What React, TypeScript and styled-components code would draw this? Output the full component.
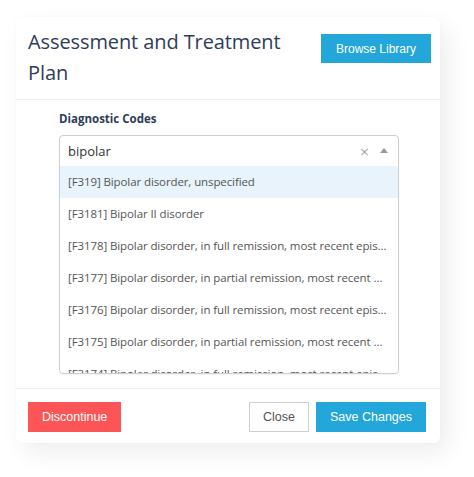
import React from "react";
import styled, { createGlobalStyle } from "styled-components";

const Global = createGlobalStyle`
  html, body { margin: 0; padding: 0; background: #ffffff; }
  body { font-family: "Open Sans", "Noto Sans", sans-serif; }
  * { box-sizing: border-box; }
`;

const Page = styled.div`
  padding: 17px 34px 34px 16px;
`;

const Card = styled.div`
  width: 424px;
  height: 426px;
  background: #fff;
  border-radius: 6px;
  box-shadow: 8px 10px 24px rgba(0, 0, 0, 0.07), 0 0 2px rgba(0, 0, 0, 0.03);
  display: flex;
  flex-direction: column;
`;

const Header = styled.div`
  display: flex;
  align-items: flex-start;
  justify-content: space-between;
  padding: 9px 9px 11px 12px;
  border-bottom: 1px solid #ececec;
`;

const Title = styled.h2`
  margin: 0;
  width: 270px;
  font-family: "Open Sans", sans-serif;
  font-size: 20px;
  letter-spacing: -0.1px;
  font-weight: 400;
  line-height: 31px;
  color: #2e3d58;
`;

const Button = styled.button<{ $variant: "primary" | "danger" | "default" }>`
  font-family: "Liberation Sans", Arial, sans-serif;
  font-size: 12.5px;
  height: 30px;
  padding: 0 13px;
  border: 1px solid
    ${(p) => (p.$variant === "primary" ? "#23a6da" : p.$variant === "danger" ? "#fd5557" : "#cfcfcf")};
  background: ${(p) => (p.$variant === "primary" ? "#23a6da" : p.$variant === "danger" ? "#fd5557" : "#fff")};
  color: ${(p) => (p.$variant === "default" ? "#555" : "#fff")};
  border-radius: 0;
  cursor: pointer;
`;

const BrowseButton = styled(Button)`
  margin-top: 8px;
  height: 29px;
  padding: 0 14px;
  font-size: 12px;
`;

const Body = styled.div`
  flex: 1;
  padding: 11px 41px 14px 43px;
  border-bottom: 1px solid #ececec;
`;

const Label = styled.div`
  font-family: "Open Sans", sans-serif;
  font-size: 11.5px;
  font-weight: 700;
  line-height: 16px;
  color: #2e3d58;
  margin-bottom: 8px;
`;

const Select = styled.div`
  border: 1px solid #cfcfcf;
  border-radius: 4px;
  overflow: hidden;
  box-shadow: 0 1px 2px rgba(0, 0, 0, 0.06);
`;

const InputRow = styled.div`
  height: 30px;
  display: flex;
  align-items: center;
  padding: 0 10px 0 8px;
  gap: 10px;
`;

const InputText = styled.div`
  flex: 1;
  font-family: "Open Sans", sans-serif;
  font-size: 13px;
  color: #333;
`;

const ClearIcon = styled.span`
  font-family: "DejaVu Sans", sans-serif;
  font-size: 13px;
  color: #aaa;
  line-height: 1;
`;

const Arrow = styled.span`
  width: 0;
  height: 0;
  border-left: 4px solid transparent;
  border-right: 4px solid transparent;
  border-bottom: 5px solid #999;
  margin-top: -1px;
`;

const List = styled.div`
  height: 207px;
  overflow: hidden;
`;

const Option = styled.div<{ $active?: boolean }>`
  height: 32px;
  line-height: 32px;
  padding: 0 10px 0 8px;
  font-family: "Open Sans", sans-serif;
  font-size: 11.5px;
  letter-spacing: -0.1px;
  color: #555;
  white-space: nowrap;
  overflow: hidden;
  text-overflow: ellipsis;
  background: ${(p) => (p.$active ? "#e8f3fb" : "transparent")};
`;

const Footer = styled.div`
  display: flex;
  align-items: center;
  padding: 13px 14px 11px 12px;
  gap: 7px;
`;

const Spacer = styled.div`
  flex: 1;
`;

const options = [
  "[F319] Bipolar disorder, unspecified",
  "[F3181] Bipolar II disorder",
  "[F3178] Bipolar disorder, in full remission, most recent episode mixed",
  "[F3177] Bipolar disorder, in partial remission, most recent episode mixed",
  "[F3176] Bipolar disorder, in full remission, most recent episode depressed",
  "[F3175] Bipolar disorder, in partial remission, most recent episode depressed",
  "[F3174] Bipolar disorder, in full remission, most recent episode manic",
];

export default function App() {
  return (
    <>
      <Global />
      <Page>
        <Card>
          <Header>
            <Title>Assessment and Treatment Plan</Title>
            <BrowseButton $variant="primary">Browse Library</BrowseButton>
          </Header>
          <Body>
            <Label>Diagnostic Codes</Label>
            <Select>
              <InputRow>
                <InputText>bipolar</InputText>
                <ClearIcon>×</ClearIcon>
                <Arrow />
              </InputRow>
              <List>
                {options.map((o, i) => (
                  <Option key={o} $active={i === 0}>
                    {o}
                  </Option>
                ))}
              </List>
            </Select>
          </Body>
          <Footer>
            <Button $variant="danger">Discontinue</Button>
            <Spacer />
            <Button $variant="default">Close</Button>
            <Button $variant="primary">Save Changes</Button>
          </Footer>
        </Card>
      </Page>
    </>
  );
}
